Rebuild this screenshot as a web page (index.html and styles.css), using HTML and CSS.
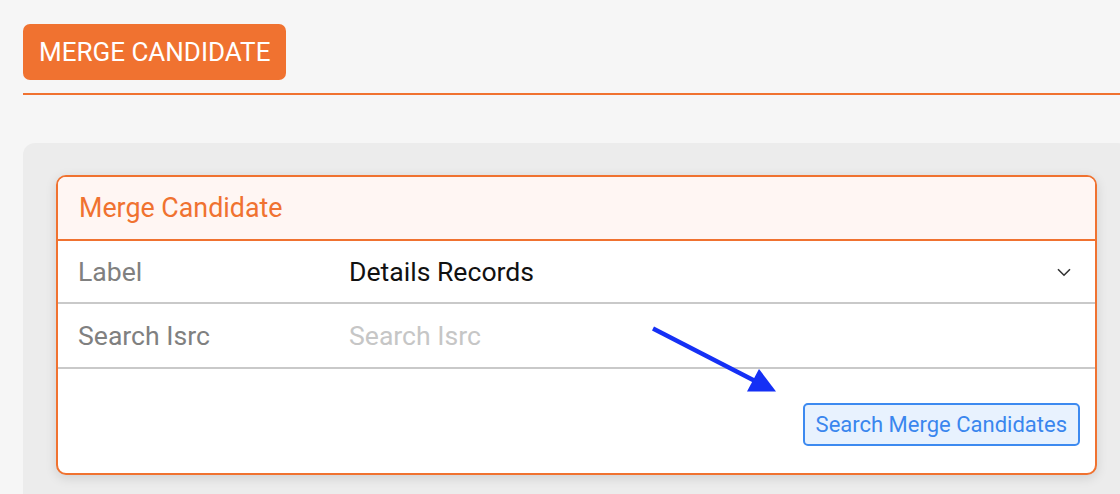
FILE: index.html
```html
<!DOCTYPE html>
<html lang="en">
<head>
<meta charset="utf-8">
<title>Merge Candidate</title>
<link rel="stylesheet" href="styles.css">
</head>
<body>
<div class="page">
  <button class="top-btn" type="button">MERGE CANDIDATE</button>
  <div class="rule"></div>
  <section class="panel">
    <div class="card">
      <div class="card-head">Merge Candidate</div>
      <div class="row row-first">
        <div class="row-label">Label</div>
        <div class="row-value select">
          <span>Details Records</span>
          <svg class="chev" width="14" height="9" viewBox="0 0 14 9"><path d="M1 1.2 L7 7.2 L13 1.2" fill="none" stroke="#333" stroke-width="1.6"/></svg>
        </div>
      </div>
      <div class="row row-second">
        <div class="row-label">Search Isrc</div>
        <div class="row-value"><input class="text-input" type="text" placeholder="Search Isrc"></div>
      </div>
      <div class="card-foot">
        <button class="search-btn" type="button">Search Merge Candidates</button>
      </div>
    </div>
  </section>
</div>
<svg class="annot" width="1120" height="494" viewBox="0 0 1120 494">
  <line x1="653" y1="328.5" x2="757" y2="382" stroke="#1530f5" stroke-width="4.5" stroke-linecap="butt"/>
  <polygon points="759,369 747,391.5 776,391.5" fill="#1530f5"/>
</svg>
</body>
</html>
```
FILE: styles.css
```css
html, body {
  margin: 0;
  padding: 0;
  overflow: hidden;
}
body {
  background: #f6f6f6;
  font-family: Roboto, "Liberation Sans", Arial, sans-serif;
  width: 1120px;
  height: 494px;
  position: relative;
}
.page {
  padding: 24px 0 0 23px;
  width: 1106px;
}
.top-btn {
  display: inline-flex;
  align-items: center;
  height: 56px;
  padding: 0 16px;
  background: #f07230;
  color: #fff;
  border: none;
  border-radius: 7px;
  font-family: inherit;
  font-size: 26px;
  font-weight: 400;
  letter-spacing: 0;
}
.rule {
  margin-top: 13px;
  height: 2px;
  background: #f07230;
}
.panel {
  margin-top: 48px;
  background: #ececec;
  border-radius: 12px 12px 0 0;
  padding: 32px 32px 30px 33px;
}
.card {
  background: #fff;
  border: 2px solid #f07230;
  border-radius: 10px;
  overflow: hidden;
  box-shadow: 0 3px 12px rgba(0, 0, 0, 0.12);
}
.card-head {
  height: 62px;
  display: flex;
  align-items: center;
  padding-left: 21px;
  background: #fff6f3;
  border-bottom: 2px solid #f07230;
  color: #f07230;
  font-size: 26.8px;
}
.row {
  display: grid;
  grid-template-columns: 291px 1fr;
  align-items: center;
  border-bottom: 2px solid #c9c9c9;
  font-size: 26.6px;
}
.row-first { height: 61px; }
.row-second { height: 63px; }
.row-label {
  padding-left: 20px;
  color: #808080;
}
.row-value {
  color: #111;
  padding-right: 24px;
}
.select {
  display: flex;
  align-items: center;
  justify-content: space-between;
}
.chev {
  display: block;
  margin-top: 2px;
}
.text-input {
  border: none;
  outline: none;
  padding: 0;
  margin: 0;
  width: 100%;
  font-family: inherit;
  font-size: 26.6px;
  color: #111;
  background: transparent;
}
.text-input::placeholder {
  color: #c6c6c6;
}
.card-foot {
  height: 104px;
  display: flex;
  justify-content: flex-end;
  align-items: flex-start;
  padding: 34px 15px 0 0;
  box-sizing: border-box;
}
.search-btn {
  height: 43px;
  padding: 0 11px;
  background: #e8f2fe;
  border: 2px solid #3d8af0;
  border-radius: 5px;
  color: #3a86ee;
  font-family: inherit;
  font-size: 22px;
}
.annot {
  position: absolute;
  left: 0;
  top: 0;
  pointer-events: none;
}
```
